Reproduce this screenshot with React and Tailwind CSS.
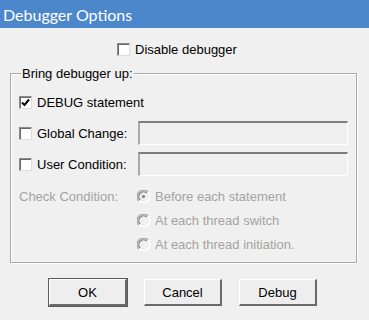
import React from 'react';

const Check = ({ checked }) => (
  <div className="w-[13px] h-[13px] shrink-0 bg-white border-t border-l border-t-[#8a8a8a] border-l-[#8a8a8a] border-r border-b border-r-[#dcdcdc] border-b-[#dcdcdc] shadow-[inset_1px_1px_0_#6a6a6a] flex items-center justify-center">
    {checked && (
      <svg width="9" height="9" viewBox="0 0 9 9">
        <path d="M1 4.5 L3.5 7 L8 1.5" fill="none" stroke="#000" strokeWidth="2" />
      </svg>
    )}
  </div>
);

const Radio = ({ selected }) => (
  <svg width="13" height="13" viewBox="0 0 13 13" className="shrink-0">
    <circle cx="6.5" cy="6.5" r="6" fill="#f0f0f0" />
    <path d="M11 2 A6 6 0 0 0 2 11" fill="none" stroke="#a5a5a5" strokeWidth="1.3" />
    <path d="M9.8 3.2 A4.6 4.6 0 0 0 3.2 9.8" fill="none" stroke="#7a7a7a" strokeWidth="1.2" />
    <path d="M2 11 A6 6 0 0 0 11 2" fill="none" stroke="#ffffff" strokeWidth="1.3" />
    {selected && <circle cx="6.5" cy="6.5" r="1.7" fill="#8f8f8f" />}
  </svg>
);

const Field = () => (
  <div className="w-[210px] h-[24px] bg-[#f0f0f0] border-t-2 border-l-2 border-t-[#7d7d7d] border-l-[#a8a8a8] border-r border-b border-r-white border-b-white" />
);

const Button = ({ label, main }) => (
  <button
    className={`w-[78px] h-[27px] bg-[#eeeeee] text-[13px] text-black border-t border-l border-t-white border-l-white border-r-2 border-b-2 border-r-[#6a6a6a] border-b-[#6a6a6a] ${main ? 'outline outline-1 outline-[#5a5a5a]' : ''}`}
  >
    {label}
  </button>
);

const App = () => {
  return (
    <div className="w-[369px] h-[320px] bg-[#f0f0f0] font-['Liberation_Sans',Arial,sans-serif] text-[13px] leading-[15px] text-black overflow-hidden">
      <div className="h-[28px] bg-[#4c87cc] flex items-center px-[3px] text-white text-[16px] font-['Lato','Open_Sans',sans-serif]">
        Debugger Options
      </div>

      <div className="mt-[15px] pl-[117px] flex items-center gap-[5px] h-[13px]">
        <Check />
        <span>Disable debugger</span>
      </div>

      <div className="relative mt-[17px] ml-[10px] w-[347px] border border-[#a9a9a9] shadow-[1px_1px_0_white,inset_1px_1px_0_white]">
        <span className="absolute -top-[8px] left-[10px] bg-[#f0f0f0] px-[1px]">Bring debugger up:</span>

        <div className="pt-[16px] pl-[8px] flex flex-col gap-[7px]">
          <div className="h-[24px] flex items-center">
            <Check checked />
            <span className="ml-[5px]">DEBUG statement</span>
          </div>
          <div className="h-[24px] flex items-center">
            <Check />
            <span className="ml-[5px] w-[101px]">Global Change:</span>
            <Field />
          </div>
          <div className="h-[24px] flex items-center">
            <Check />
            <span className="ml-[5px] w-[101px]">User Condition:</span>
            <Field />
          </div>
        </div>

        <div className="mt-[8px] pl-[8px] pb-[6px] flex text-[#a3a3a3]">
          <div className="w-[118px] h-[24px] flex items-center">Check Condition:</div>
          <div className="flex flex-col">
            <div className="h-[24px] flex items-center gap-[5px]">
              <Radio selected />
              <span>Before each statement</span>
            </div>
            <div className="h-[24px] flex items-center gap-[5px]">
              <Radio />
              <span>At each thread switch</span>
            </div>
            <div className="h-[24px] flex items-center gap-[5px]">
              <Radio />
              <span>At each thread initiation.</span>
            </div>
          </div>
        </div>
      </div>

      <div className="mt-[16px] pl-[49px] flex gap-[17px]">
        <Button label="OK" main />
        <Button label="Cancel" />
        <Button label="Debug" />
      </div>
    </div>
  );
};

export default App;
